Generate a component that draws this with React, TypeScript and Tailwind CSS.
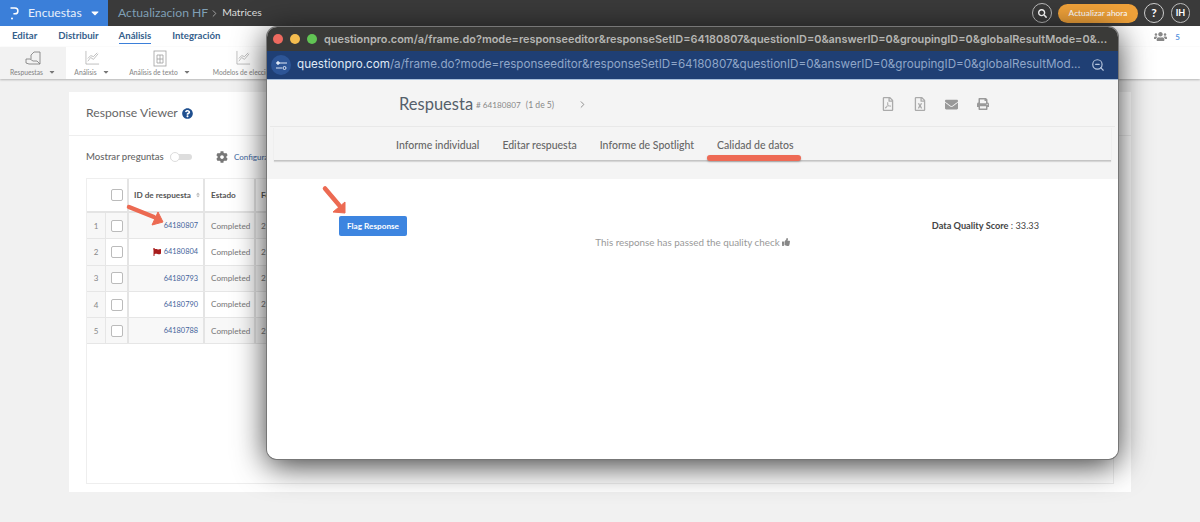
import { FaCaretDown, FaCog, FaEnvelope, FaFlag, FaPrint, FaQuestionCircle, FaRegFileExcel, FaRegFilePdf, FaSearch, FaSort, FaThumbsUp, FaUsers } from 'react-icons/fa';
import { ChevronRight, ZoomOut } from 'lucide-react';

const rows = [
  { n: 1, id: '64180807', shade: true },
  { n: 2, id: '64180804', flag: true },
  { n: 3, id: '64180793', shade: true },
  { n: 4, id: '64180790' },
  { n: 5, id: '64180788', shade: true },
];

const url = 'questionpro.com';
const urlPath = '/a/frame.do?mode=responseeditor&responseSetID=64180807&questionID=0&answerID=0&groupingID=0&globalResultMode=0&...';
const urlPathShort = '/a/frame.do?mode=responseeditor&responseSetID=64180807&questionID=0&answerID=0&groupingID=0&globalResultMod...';

function ToolItem({ label, active, w, caret = true, children }: { label: string; active?: boolean; w: string; caret?: boolean; children: React.ReactNode }) {
  return (
    <div className={`flex h-full shrink-0 flex-col items-center pt-[3px] ${w} ${active ? 'bg-[#f2f2f2] text-[#777]' : 'text-[#a0a0a0]'}`}>
      <div className="h-[17px]">{children}</div>
      <div className="flex items-center gap-[5px] whitespace-nowrap text-[6.7px] font-medium text-[#8a8a8a]">
        {label}
        {caret && <FaCaretDown className="text-[8px] text-[#777]" />}
      </div>
    </div>
  );
}

function ChartIcon() {
  return (
    <svg width="15" height="15" viewBox="0 0 16 16" fill="none" stroke="currentColor" strokeWidth="0.7">
      <path d="M1 1v14h14" />
      <path d="M3 12l3-4 3 2 5-6" />
      <path d="M3 9l3-3 3 1 4-4" />
    </svg>
  );
}

export default function App() {
  return (
    <div className="relative h-[522px] w-[1200px] overflow-hidden bg-[#f1f1f1] font-['Lato',sans-serif] text-[#666]">
      {/* top bar */}
      <div className="flex h-[26px] items-center bg-[#3a3a3a]">
        <div className="flex h-full w-[108px] items-center bg-[#3b7fd9] pl-[10px] text-[#e8f0fb]">
          <svg width="9" height="13" viewBox="0 0 9 13" fill="none" stroke="white" strokeWidth="1.5" className="shrink-0">
            <path d="M0.5 1h4.5a2.9 2.9 0 0 1 0 5.8H3.4" />
            <circle cx="2" cy="11.5" r="1" fill="white" stroke="none" />
          </svg>
          <span className="ml-[9px] text-[12.2px]">Encuestas</span>
          <FaCaretDown className="ml-[7px] text-[12px] text-white" />
        </div>
        <span className="ml-[10px] text-[12.2px] text-[#7f9fb5]">Actualizacion HF</span>
        <ChevronRight className="ml-[1px] text-[#aaa]" size={11} />
        <span className="ml-[2px] text-[10.4px] text-[#dddddd]">Matrices</span>
        <div className="ml-auto flex items-center pr-[10px]">
          <div className="flex h-[20px] w-[20px] items-center justify-center rounded-full border border-[#bbb] text-white">
            <FaSearch className="text-[9px]" />
          </div>
          <div className="ml-[6px] flex h-[19px] w-[80px] items-center justify-center rounded-full bg-[#f0a23a] text-[8.3px] font-medium text-white">Actualizar ahora</div>
          <div className="ml-[6px] flex h-[20px] w-[20px] items-center justify-center rounded-full border border-[#ccc] text-[12px] font-bold text-white">?</div>
          <div className="ml-[7px] flex h-[20px] w-[19px] items-center justify-center rounded-full border border-[#bbb] text-[9px] font-bold text-white">IH</div>
        </div>
      </div>

      {/* nav tabs */}
      <div className="flex h-[21px] items-center bg-white pl-[12px] text-[9.6px] font-bold text-[#35608c]">
        <span>Editar</span>
        <span className="ml-[21px]">Distribuir</span>
        <span className="ml-[20px] border-b border-[#3b7fd9]">Análisis</span>
        <span className="ml-[21px]">Integración</span>
        <div className="ml-auto flex items-center gap-[8px] pr-[20px] text-[#5a96e0]">
          <FaUsers className="text-[13px] text-[#888]" />
          <span className="text-[8px] font-bold">5</span>
        </div>
      </div>

      {/* toolbar */}
      <div className="relative flex h-[32px] items-center bg-white shadow-[0_1px_2px_rgba(0,0,0,0.25)]">
        <ToolItem label="Respuestas" active w="w-[66px]">
          <svg width="17" height="17" viewBox="0 0 17 17" fill="none" stroke="currentColor" strokeWidth="0.8">
            <path d="M6 9V5l3-3h6v12" />
            <path d="M1 9h4l3 2h4l3 3H4l-3-1z" />
          </svg>
        </ToolItem>
        <ToolItem label="Análisis" w="w-[52px]"><ChartIcon /></ToolItem>
        <ToolItem label="Análisis de texto" w="w-[84px]">
          <svg width="14" height="17" viewBox="0 0 14 17" fill="none" stroke="currentColor" strokeWidth="0.8">
            <rect x="1" y="1" width="12" height="15" />
            <path d="M4 5h6v8H4zM4 9h6M7 5v8" />
          </svg>
        </ToolItem>
        <ToolItem label="Modelos de elección" w="w-[82px]" caret={false}><ChartIcon /></ToolItem>
      </div>

      {/* response viewer card */}
      <div className="mx-[69px] mt-[13px] h-[400px] bg-white">
        <div className="flex h-[44px] items-center border-b border-[#eeeeee] pl-[17px] text-[12.2px] text-[#666]">
          Response Viewer
          <FaQuestionCircle className="ml-[4px] text-[11px] text-[#1f4f8f]" />
        </div>
        <div className="flex h-[42px] items-center pl-[17px] text-[9.6px] font-medium text-[#666]">
          <span className="w-[84px] whitespace-nowrap">Mostrar preguntas</span>
          <div className="relative h-[6px] w-[22px] rounded-full bg-[#dddddd]">
            <div className="absolute left-0 top-[-2px] h-[10px] w-[10px] rounded-full border border-[#ddd] bg-white" />
          </div>
          <FaCog className="ml-[24px] text-[12px] text-[#777]" />
          <span className="ml-[6px] text-[8px] text-[#4a6fa5]">Configurar</span>
        </div>

        {/* table */}
        <div className="mx-[17px] h-[306px] border border-[#eeeeee] text-[8.2px]">
          <div className="flex h-[34px] items-stretch border-b-2 border-[#e4e4e4]">
            <div className="w-[19px]" />
            <div className="flex w-[23px] items-center justify-center border-r-2 border-[#e4e4e4]">
              <div className="h-[12px] w-[12px] rounded-[2px] border border-[#bbb]" />
            </div>
            <div className="flex w-[76px] items-center whitespace-nowrap border-r-2 border-[#e4e4e4] pl-[5px] font-bold text-[#555]">
              ID de respuesta
              <FaSort className="ml-[4px] text-[6px] text-[#bbb]" />
            </div>
            <div className="flex w-[49px] items-center pl-[6px] font-bold text-[#555]">Estado</div>
            <div className="flex items-center border-l-2 border-[#e4e4e4] pl-[5px] font-bold text-[#555]">Fecha</div>
          </div>
          {rows.map((r) => (
            <div key={r.n} className={`flex h-[26.3px] items-stretch border-b border-[#e6e6e6] ${r.shade ? 'bg-[#f8f8f8]' : 'bg-white'}`}>
              <div className="flex w-[19px] items-center justify-center border-r border-[#e6e6e6] bg-[#f7f7f7] text-[8px] text-[#888]">{r.n}</div>
              <div className="flex w-[23px] items-center justify-center border-r-2 border-[#e4e4e4]">
                <div className="h-[12px] w-[12px] rounded-[2px] border border-[#bbb] bg-white" />
              </div>
              <div className="flex w-[76px] items-center justify-end border-r-2 border-[#e4e4e4] pr-[5px] text-[7.4px] text-[#46659b]">
                {r.flag && <FaFlag className="mr-[3px] text-[8px] text-[#a81c1c]" />}
                {r.id}
              </div>
              <div className="flex w-[49px] items-center pl-[6px] text-[#777]">Completed</div>
              <div className="flex items-center border-l-2 border-[#e4e4e4] pl-[5px] text-[#777]">22</div>
            </div>
          ))}
        </div>
      </div>

      {/* arrow on the table */}
      <svg className="absolute left-[124px] top-[202px]" width="44" height="26" viewBox="0 0 44 26" fill="none">
        <path d="M5 5 L30 15" stroke="#ec6a52" strokeWidth="4.5" strokeLinecap="round" />
        <path d="M39 20 L28 23 L34 10 Z" fill="#ec6a52" stroke="#ec6a52" strokeWidth="1" strokeLinejoin="round" />
      </svg>

      {/* browser popup */}
      <div className="absolute left-[267px] top-[27px] h-[432px] w-[851px] overflow-hidden rounded-[10px] shadow-[0_0_0_1px_#777,0_6px_32px_rgba(0,0,0,0.8)]">
        <div className="flex h-[24px] items-center bg-[#3a3a38] pl-[6px]">
          <span className="h-[10px] w-[10px] shrink-0 rounded-full bg-[#ee6a5f]" />
          <span className="ml-[7px] h-[10px] w-[10px] shrink-0 rounded-full bg-[#f5bd4f]" />
          <span className="ml-[7px] h-[10px] w-[10px] shrink-0 rounded-full bg-[#61c454]" />
          <span className="ml-[7px] whitespace-nowrap font-['Inter',sans-serif] text-[10.9px] font-semibold text-[#b5b5b3]">{url}{urlPath}</span>
        </div>
        <div className="flex h-[29px] items-center border-b border-[#a9c0dc] bg-[#1f3f74] pl-[4px] pr-[13px]">
          <div className="flex h-[20px] w-[20px] shrink-0 items-center justify-center rounded-full bg-[#2d5596]">
            <svg width="11" height="9" viewBox="0 0 11 9" fill="none" stroke="#dfe8f5" strokeWidth="1">
              <path d="M3 2h8M0 7h6" />
              <circle cx="2" cy="2" r="1.3" fill="#dfe8f5" />
              <circle cx="8.5" cy="7" r="1.5" />
            </svg>
          </div>
          <span className="ml-[6px] whitespace-nowrap font-['Inter',sans-serif] text-[11.65px] text-[#dfe8f5]">
            {url}<span className="text-[#8fa6c8]">{urlPathShort}</span>
          </span>
          <ZoomOut className="ml-auto shrink-0 text-[#b7c6dd]" size={14} />
        </div>

        <div className="h-[99px] bg-[#f4f4f4]">
          <div className="mx-[3px] flex h-[47px] items-center border-b border-[#e8e8e8] pb-0 pl-[129px] pr-[126px] pt-[2px]">
            <span className="w-[77px] text-[16.5px] text-[#555f6b]">Respuesta</span>
            <span className="mt-[3px] text-[8.2px] text-[#888]"># 64180807</span>
            <span className="ml-[5px] mt-[3px] text-[8.6px] text-[#888]">(1 de 5)</span>
            <ChevronRight className="ml-[23px] text-[#888]" size={11} />
            <FaRegFilePdf className="ml-auto text-[14px] text-[#aaa]" />
            <FaRegFileExcel className="ml-[18px] text-[14px] text-[#aaa]" />
            <FaEnvelope className="ml-[18px] text-[13px] text-[#999]" />
            <FaPrint className="ml-[19px] text-[12px] text-[#999]" />
          </div>
          <div className="relative mx-[7px] flex h-[34px] items-center gap-[23px] border-b border-[#c4c4c4] pl-[122px] pt-[5px] text-[10.5px] font-medium text-[#666] shadow-[0_1px_1px_rgba(0,0,0,0.12)]">
            <span>Informe individual</span>
            <span>Editar respuesta</span>
            <span>Informe de Spotlight</span>
            <span className="relative">
              Calidad de datos
              <span className="absolute left-[-10px] top-[17px] h-[6px] w-[94px] rounded-full bg-[#ee6a55] shadow-[0_1px_2px_rgba(0,0,0,0.25)]" />
            </span>
          </div>
        </div>

        <div className="h-[280px] bg-white pl-[72px] pr-[79px] pt-[37px]">
          <div className="flex items-center justify-between">
            <button className="flex h-[20px] w-[68px] items-center justify-center rounded-[2px] bg-[#3d85e0] text-[8.2px] font-bold text-white">Flag Response</button>
            <div className="mt-[-1px] text-[9.2px] text-[#444]"><b className="font-bold">Data Quality Score</b> : 33.33</div>
          </div>
          <div className="ml-[-72px] mr-[-79px] mt-[-1px] flex items-center justify-center text-[9.85px] text-[#999]">
            This response has passed the quality check
            <FaThumbsUp className="ml-[2px] text-[8px] text-[#888]" />
          </div>
        </div>
      </div>

      {/* arrow on the button */}
      <svg className="absolute left-[320px] top-[184px]" width="30" height="32" viewBox="0 0 30 32" fill="none">
        <path d="M5 4.5 L19 21" stroke="#ec6a52" strokeWidth="4.5" strokeLinecap="round" />
        <path d="M25 29 L13 28 L25 18 Z" fill="#ec6a52" stroke="#ec6a52" strokeWidth="1" strokeLinejoin="round" />
      </svg>
    </div>
  );
}
